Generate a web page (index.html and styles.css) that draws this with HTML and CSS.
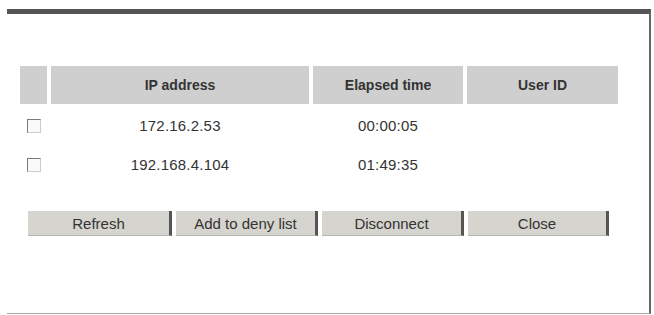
FILE: index.html
```html
<!DOCTYPE html>
<html>
<head>
<meta charset="utf-8">
<link rel="stylesheet" href="styles.css">
</head>
<body>
<div class="panel">
  <div class="grid">
    <div class="hcell"></div>
    <div class="hcell">IP address</div>
    <div class="hcell">Elapsed time</div>
    <div class="hcell">User ID</div>

    <div class="cell"><span class="check"></span></div>
    <div class="cell">172.16.2.53</div>
    <div class="cell">00:00:05</div>
    <div class="cell"></div>

    <div class="cell"><span class="check"></span></div>
    <div class="cell">192.168.4.104</div>
    <div class="cell">01:49:35</div>
    <div class="cell"></div>
  </div>
  <div class="buttons">
    <div class="btn w144">Refresh</div>
    <div class="btn w142">Add to deny list</div>
    <div class="btn w142">Disconnect</div>
    <div class="btn w141">Close</div>
  </div>
</div>
</body>
</html>
```
FILE: styles.css
```css
html, body {
  margin: 0;
  padding: 0;
  background: #ffffff;
}
body {
  font-family: "Liberation Sans", Arial, sans-serif;
  color: #333333;
}
.panel {
  margin: 9px 0 0 7px;
  width: 642px;
  height: 299px;
  border-top: 5px solid #555555;
  border-right: 2px solid #666666;
  border-bottom: 1px solid #a8a8a8;
  padding: 52px 0 0 13px;
  box-sizing: border-box;
  height: 305px;
  width: 644px;
}
.grid {
  display: grid;
  grid-template-columns: 27px 258px 150px 151px;
  grid-template-rows: 38px 39px 39px;
  column-gap: 4px;
  row-gap: 0;
}
.hcell {
  background: #cfcfcf;
  font-weight: bold;
  font-size: 14px;
  color: #333333;
  display: flex;
  align-items: center;
  justify-content: center;
  margin-bottom: 0;
}
.cell {
  font-size: 15px;
  letter-spacing: 0.2px;
  display: flex;
  align-items: center;
  justify-content: center;
  padding-top: 4px;
}
.check {
  display: block;
  width: 12px;
  height: 12px;
  border-top: 1px solid #7a7a7a;
  border-left: 1px solid #7a7a7a;
  border-bottom: 1px solid #cccccc;
  border-right: 1px solid #cccccc;
  background: #fafafa;
}
.buttons {
  display: flex;
  gap: 4px;
  margin: 29px 0 0 8px;
}
.btn {
  height: 25px;
  box-sizing: border-box;
  background: #d5d4ce;
  border-right: 3px solid #555555;
  border-bottom: 1px solid #b5b5b0;
  font-size: 15px;
  color: #333333;
  display: flex;
  align-items: center;
  justify-content: center;
}
.w144 { width: 144px; }
.w142 { width: 142px; }
.w141 { width: 141px; }
```
